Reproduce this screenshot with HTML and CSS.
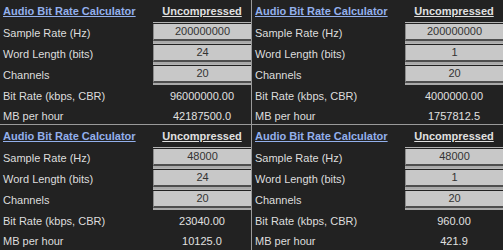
FILE: index.html
```
<!DOCTYPE html>
<html lang="en">

<head>
    <meta charset="UTF-8">
    <meta name="viewport" content="width=device-width, initial-scale=1.0">
    <title>Audio Bit Rate Calculator</title>
    <link rel="stylesheet" href="styles.css">
</head>

<body>
    <div id="wrap">
        <div class="calc">
            <div class="row head">
                <a class="title" href="#">Audio Bit Rate Calculator</a>
                <span class="mode">Uncompressed</span>
            </div>
            <div class="row">
                <span class="label">Sample Rate (Hz)</span>
                <div class="field"><div class="box">200000000</div></div>
            </div>
            <div class="row">
                <span class="label">Word Length (bits)</span>
                <div class="field"><div class="box">24</div></div>
            </div>
            <div class="row">
                <span class="label">Channels</span>
                <div class="field"><div class="box">20</div></div>
            </div>
            <div class="row out">
                <span class="label">Bit Rate (kbps, CBR)</span>
                <span class="val">96000000.00</span>
            </div>
            <div class="row out last">
                <span class="label">MB per hour</span>
                <span class="val">42187500.0</span>
            </div>
        </div>
        <div class="calc">
            <div class="row head">
                <a class="title" href="#">Audio Bit Rate Calculator</a>
                <span class="mode">Uncompressed</span>
            </div>
            <div class="row">
                <span class="label">Sample Rate (Hz)</span>
                <div class="field"><div class="box">200000000</div></div>
            </div>
            <div class="row">
                <span class="label">Word Length (bits)</span>
                <div class="field"><div class="box">1</div></div>
            </div>
            <div class="row">
                <span class="label">Channels</span>
                <div class="field"><div class="box">20</div></div>
            </div>
            <div class="row out">
                <span class="label">Bit Rate (kbps, CBR)</span>
                <span class="val">4000000.00</span>
            </div>
            <div class="row out last">
                <span class="label">MB per hour</span>
                <span class="val">1757812.5</span>
            </div>
        </div>
        <div class="calc">
            <div class="row head">
                <a class="title" href="#">Audio Bit Rate Calculator</a>
                <span class="mode">Uncompressed</span>
            </div>
            <div class="row">
                <span class="label">Sample Rate (Hz)</span>
                <div class="field"><div class="box">48000</div></div>
            </div>
            <div class="row">
                <span class="label">Word Length (bits)</span>
                <div class="field"><div class="box">24</div></div>
            </div>
            <div class="row">
                <span class="label">Channels</span>
                <div class="field"><div class="box">20</div></div>
            </div>
            <div class="row out">
                <span class="label">Bit Rate (kbps, CBR)</span>
                <span class="val">23040.00</span>
            </div>
            <div class="row out last">
                <span class="label">MB per hour</span>
                <span class="val">10125.0</span>
            </div>
        </div>
        <div class="calc">
            <div class="row head">
                <a class="title" href="#">Audio Bit Rate Calculator</a>
                <span class="mode">Uncompressed</span>
            </div>
            <div class="row">
                <span class="label">Sample Rate (Hz)</span>
                <div class="field"><div class="box">48000</div></div>
            </div>
            <div class="row">
                <span class="label">Word Length (bits)</span>
                <div class="field"><div class="box">1</div></div>
            </div>
            <div class="row">
                <span class="label">Channels</span>
                <div class="field"><div class="box">20</div></div>
            </div>
            <div class="row out">
                <span class="label">Bit Rate (kbps, CBR)</span>
                <span class="val">960.00</span>
            </div>
            <div class="row out last">
                <span class="label">MB per hour</span>
                <span class="val">421.9</span>
            </div>
        </div>
    </div>
</body>

</html>
```
FILE: styles.css
```
* {
    margin: 0;
    padding: 0;
}

body {
    background-color: #222;
    font-family: "Liberation Sans", Arial, sans-serif;
    font-size: 11px;
    color: #ddd;
}

#wrap {
    display: grid;
    grid-template-columns: 251px 251px;
    grid-template-rows: 124px 125px;
    gap: 1px;
    width: 503px;
    height: 250px;
    background-color: #9a9a9a;
}

.calc {
    background-color: #222;
    overflow: hidden;
}

.row {
    display: grid;
    grid-template-columns: 150px 98px;
    align-items: center;
    padding-left: 3px;
    height: 21px;
}

.head {
    height: 22px;
    font-weight: bold;
}

.title {
    color: #93b0ec;
    text-decoration: underline;
}

.mode {
    text-align: center;
    text-decoration: underline;
    color: #e0e0e0;
}

/* input look: light line, gap, grey box, dark + light line under it */
.field {
    height: 21px;
    border-top: 1px solid #b4b4b4;
    padding-top: 1px;
    border-bottom: 2px solid #a9a9a9;
    box-sizing: border-box;
}

.box {
    height: 15px;
    line-height: 15px;
    background-color: #c8c8c8;
    border-bottom: 2px solid #4e4e4e;
    border-left: 1px solid #8c8c8c;
    color: #333;
    text-align: center;
}

.out {
    height: 22px;
}

.last {
    height: 18px;
}

.val {
    text-align: center;
    color: #e0e0e0;
}
```
